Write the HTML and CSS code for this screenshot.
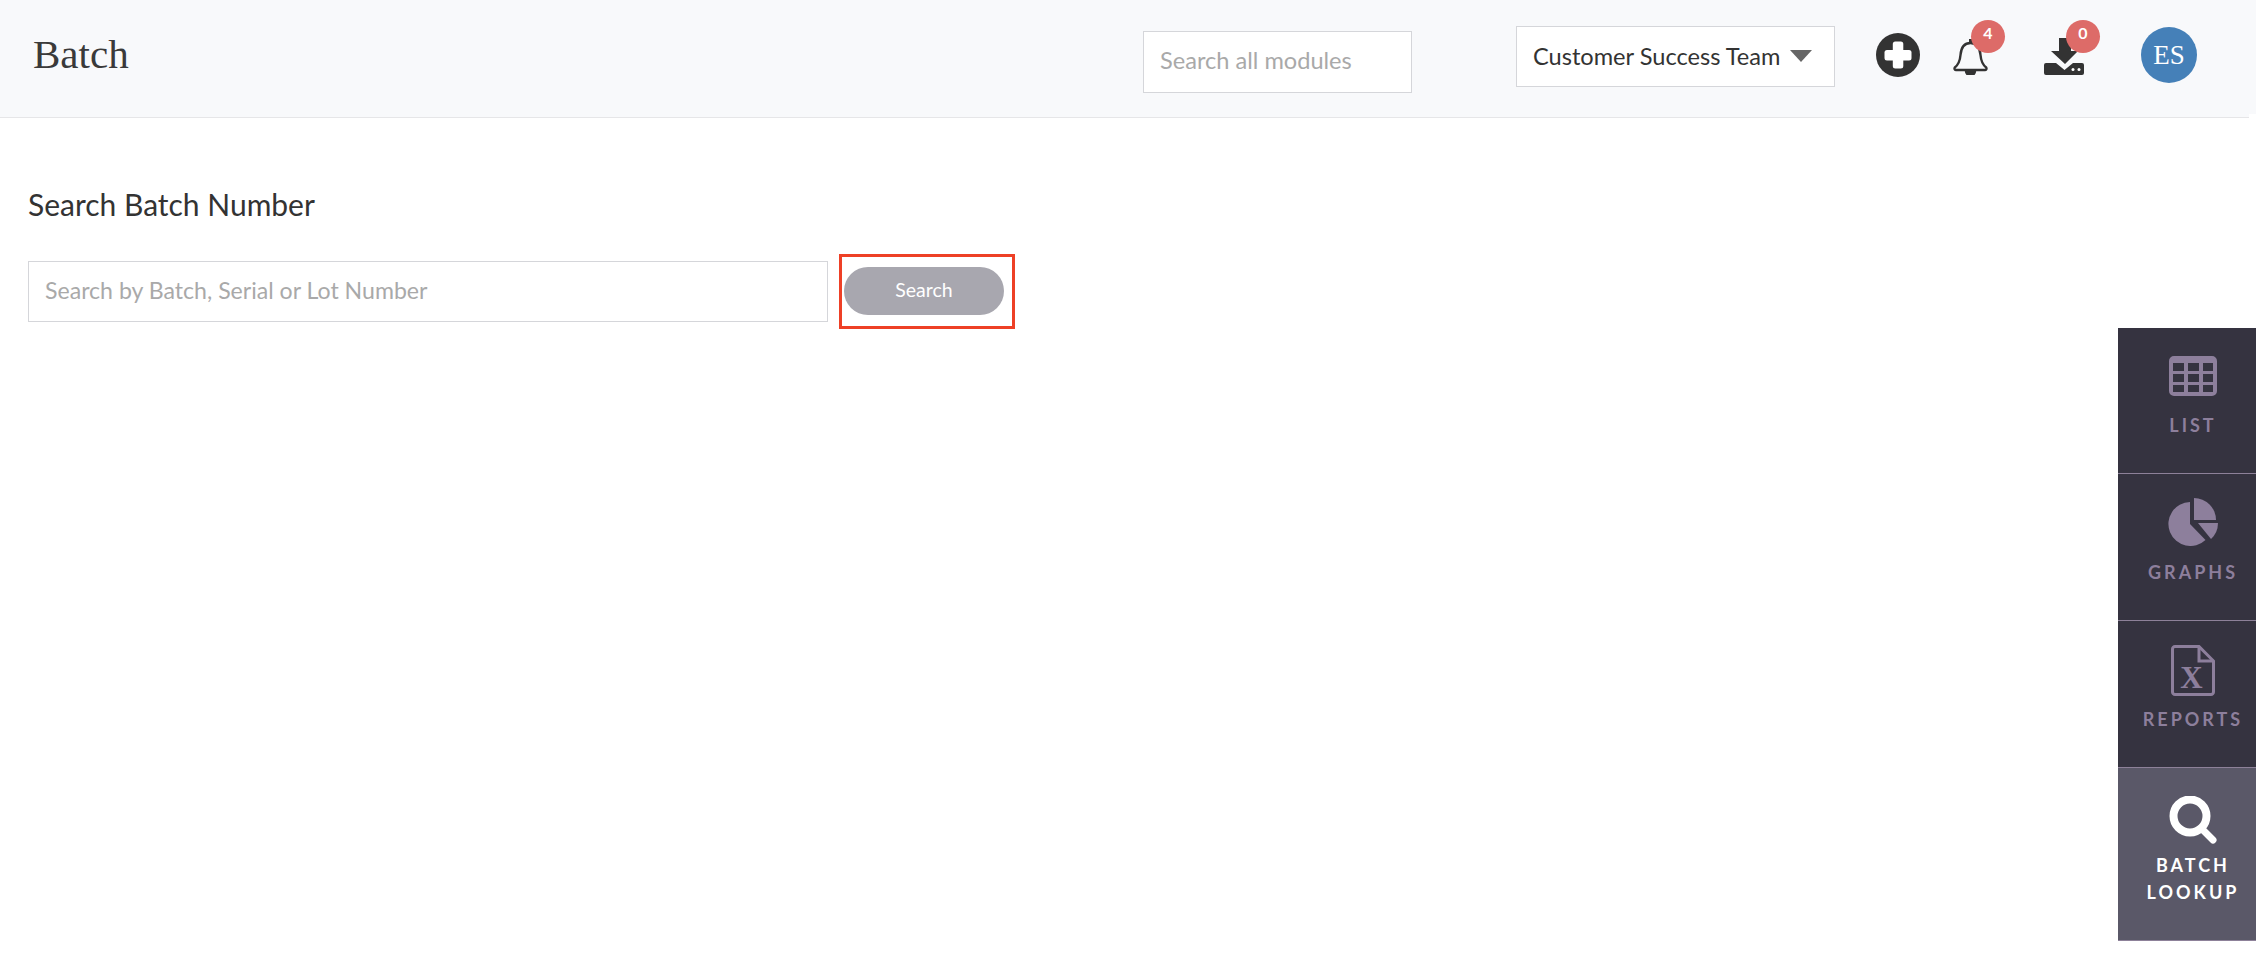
FILE: index.html
```html
<!DOCTYPE html>
<html lang="en">
<head>
<meta charset="utf-8">
<title>Batch</title>
<link rel="stylesheet" href="styles.css">
</head>
<body>
<header class="topbar">
  <h1 class="brand">Batch</h1>
  <input class="global-search" type="text" placeholder="Search all modules">
  <div class="team-select"><span>Customer Success Team</span><i class="caret"></i></div>
  <svg class="icon-plus" width="44" height="44" viewBox="0 0 44 44"><circle cx="22" cy="22" r="22" fill="#333"/><rect x="8.500" y="17" width="27" height="10.500" rx="2.500" fill="#fff"/><rect x="16.800" y="8.500" width="10.500" height="27" rx="2.500" fill="#fff"/></svg>
  <div class="notify">
    <svg width="35" height="37" viewBox="0 0 35 37" fill="none" stroke="#333" stroke-width="2.400"><path d="M17.500 5C10.500 5 8 11 7.500 17 7 23 5 27 1.800 29.500 1 31 2 32 3 32H32C33 32 34 31 33.200 29.500 30 27 28 23 27.500 17 27 11 24.500 5 17.500 5Z"/><path d="M17.500 1v4" stroke-width="3"/><path d="M13 33a4.500 4.500 0 0 0 9 0Z" fill="#333"/></svg>
    <span class="badge">4</span>
  </div>
  <div class="notify notify-download">
    <svg width="40" height="37" viewBox="0 0 40 37" fill="#333"><path d="M15 0H27V13H34L21 26 7 13H15Z"/><path d="M2 25H12L20.500 32 29 25H38A2 2 0 0 1 40 27V35A2 2 0 0 1 38 37H2A2 2 0 0 1 0 35V27A2 2 0 0 1 2 25Z"/><circle cx="29" cy="31.500" r="1.500" fill="#fff"/><circle cx="35" cy="31.500" r="1.500" fill="#fff"/></svg>
    <span class="badge">0</span>
  </div>
  <div class="avatar">ES</div>
  <i class="corner-notch"></i>
</header>

<div class="page">
  <main class="content">
    <h2 class="section-title">Search Batch Number</h2>
    <div class="search-row">
      <input class="batch-input" type="text" placeholder="Search by Batch, Serial or Lot Number">
      <div class="highlight"><button class="search-btn" type="button">Search</button></div>
    </div>
  </main>

  <nav class="rail">
    <a class="rail-item item-list">
      <svg width="48" height="40" viewBox="0 0 48 40" fill="#8d7f9c" fill-rule="evenodd"><path d="M5 0H43A5 5 0 0 1 48 5V35A5 5 0 0 1 43 40H5A5 5 0 0 1 0 35V5A5 5 0 0 1 5 0ZM4 7V15H15V7ZM19 7V15H30V7ZM34 7V15H44V7ZM4 18V26H15V18ZM19 18V26H30V18ZM34 18V26H44V18ZM4 29V36H15V29ZM19 29V36H30V29ZM34 29V36H44V29Z"/></svg>
      <span>LIST</span>
    </a>
    <a class="rail-item item-graphs">
      <svg width="50" height="48" viewBox="0 0 50 48" fill="#8d7f9c"><path d="M22 4V26L37.500 42A22 22 0 1 1 22 4Z"/><path d="M26 0A22 22 0 0 1 48 22H26Z"/><path d="M30 25H50A22 22 0 0 1 43 41Z"/></svg>
      <span>GRAPHS</span>
    </a>
    <a class="rail-item item-reports">
      <svg width="44" height="51" viewBox="0 0 44 51" fill="none" stroke="#8d7f9c" stroke-width="3"><path d="M4 1.500H28L42.500 16V47A2.500 2.500 0 0 1 40 49.500H4A2.500 2.500 0 0 1 1.500 47V4A2.500 2.500 0 0 1 4 1.500Z"/><path d="M28 1.500V16H42.500"/><text x="22" y="43" text-anchor="middle" class="file-x">X</text></svg>
      <span>REPORTS</span>
    </a>
    <a class="rail-item item-lookup">
      <svg width="48" height="48" viewBox="0 0 48 48" fill="none" stroke="#fff"><circle cx="21" cy="20" r="16.500" stroke-width="8"/><path d="M33 33L44 44" stroke-width="7" stroke-linecap="round"/></svg>
      <span>BATCH<br>LOOKUP</span>
    </a>
  </nav>
</div>
</body>
</html>
```

FILE: styles.css
```css
* { box-sizing: border-box; }
html, body { margin: 0; height: 100%; background: #fff; overflow: hidden; }
body { font-family: "Lato", "Liberation Sans", sans-serif; color: #333; }

.topbar {
  position: relative;
  display: flex;
  align-items: flex-start;
  height: 118px;
  padding-right: 59px;
  background: #f8f9fb;
  border-bottom: 1px solid #e6e6e8;
}
.brand {
  margin: 31px 0 0 33px;
  font: 400 41px/46px "Liberation Serif", serif;
  color: #3a3a3a;
}
.global-search {
  margin: 31px 0 0 auto;
  width: 269px;
  height: 62px;
  padding: 0 16px 4px;
  border: 1px solid #d5d6da;
  background: #fff;
  font: 400 23.600px "Lato", sans-serif;
  outline: 0;
}
.global-search::placeholder, .batch-input::placeholder { color: #a9a9a9; opacity: 1; }
.team-select {
  display: flex;
  align-items: center;
  margin: 26px 0 0 104px;
  width: 319px;
  height: 61px;
  padding: 0 0 1px 16px;
  border: 1px solid #d5d6da;
  background: #fff;
  font-size: 23.600px;
  color: #333;
}
.caret {
  margin-left: 10px;
  border-left: 11px solid transparent;
  border-right: 11px solid transparent;
  border-top: 12px solid #666;
}
.icon-plus { margin: 33px 0 0 41px; flex: none; }
.notify { position: relative; margin: 38px 0 0 33px; height: 37px; }
.notify svg { display: block; }
.notify-download { margin-left: 56px; }
.badge {
  position: absolute;
  left: 18px;
  top: -18px;
  width: 34px;
  height: 33px;
  padding-top: 3px;
  border-radius: 50%;
  background: #dd6b68;
  color: #fff;
  font: 700 16px/20px "Lato", sans-serif;
  text-align: center;
}
.notify-download .badge { left: 22px; }
.avatar {
  margin: 27px 0 0 57px;
  width: 56px;
  height: 56px;
  border-radius: 50%;
  background: #4580b8;
  color: #fff;
  font: 400 27px/56px "Liberation Serif", serif;
  text-align: center;
}
.corner-notch {
  position: absolute;
  right: 0;
  bottom: -1px;
  width: 7px;
  height: 4px;
  background: #fff;
}

.page { display: flex; height: 850px; }
.content { flex: 1; padding: 69px 0 0 28px; }
.section-title {
  margin: 0;
  font: 400 30px/34px "Lato", sans-serif;
  color: #333;
}
.search-row { display: flex; align-items: flex-start; margin-top: 33px; }
.batch-input {
  margin-top: 7px;
  width: 800px;
  height: 61px;
  padding: 0 16px 4px;
  border: 1px solid #d5d6da;
  background: #fff;
  font: 400 23.100px "Lato", sans-serif;
  outline: 0;
}
.highlight {
  margin-left: 11px;
  width: 176px;
  height: 75px;
  padding: 10px 0 0 2px;
  border: 3px solid #ee4026;
}
.search-btn {
  display: block;
  width: 160px;
  height: 48px;
  padding: 0 0 3px;
  border: 0;
  border-radius: 24px;
  background: #a8a7af;
  color: #fff;
  font: 400 19.500px "Lato", sans-serif;
}

.rail { flex: none; width: 138px; margin-top: 210px; align-self: flex-start; }
.rail-item {
  display: flex;
  flex-direction: column;
  align-items: center;
  padding-left: 12px;
  background: #353340;
  border-bottom: 1px solid #8d8199;
  color: #8d7f9c;
  font-weight: 700;
  font-size: 18px;
  line-height: 27px;
  letter-spacing: 3px;
  text-align: center;
}
.rail-item svg { display: block; flex: none; }
.item-list { height: 146px; padding-top: 28px; }
.item-list svg { margin-bottom: 16px; }
.item-graphs { height: 147px; padding-top: 24px; }
.item-graphs svg { margin-bottom: 13px; }
.item-reports { height: 147px; padding-top: 24px; }
.item-reports svg { margin-bottom: 10px; }
.item-lookup { height: 173px; padding-top: 28px; background: #5a5868; color: #fff; }
.item-lookup svg { margin-bottom: 8px; }
.file-x { font: 700 31px "Liberation Serif", serif; fill: #8d7f9c; stroke: none; }
```
